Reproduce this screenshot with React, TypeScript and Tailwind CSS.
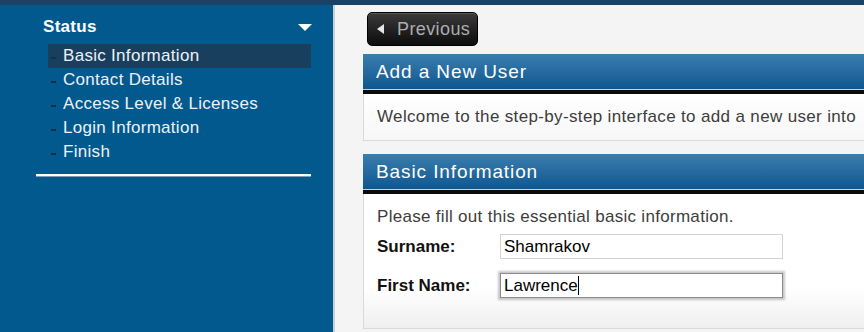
import React from 'react';

const steps = [
  'Basic Information',
  'Contact Details',
  'Access Level & Licenses',
  'Login Information',
  'Finish',
];

const Sidebar: React.FC = () => {
  return (
    <aside className="w-[335px] shrink-0 bg-[#02598e] border-r-2 border-[#c9cfd4] pl-[36px] pr-[22px]">
      {/* Status heading */}
      <div className="mt-[10px] h-[24px] pl-[7px] flex items-center justify-between">
        <span className="text-[17px] font-bold text-white tracking-[0.3px]">Status</span>
        <svg width="14" height="7" viewBox="0 0 14 7" className="mr-[-1px]">
          <path d="M0 0 H14 L7 7 Z" fill="#ffffff" />
        </svg>
      </div>

      {/* Steps */}
      <ul className="mt-[5px] ml-[12px]">
        {steps.map((s, i) => (
          <li
            key={s}
            className={`h-[24px] flex items-center pl-[3px] ${i === 0 ? 'bg-[#193f5f]' : ''}`}
          >
            <span className="w-[5px] h-[2px] mt-[3px] bg-[#122f48] mr-[7px]" />
            <span className="text-[17px] text-[#edf2f6] tracking-[0.3px]">{s}</span>
          </li>
        ))}
      </ul>

      <div className="mt-[10px] h-[2px] bg-white shadow-[0_1px_0_#7f9cb3]" />
    </aside>
  );
};

const PanelHeader: React.FC<{ title: string }> = ({ title }) => (
  <div className="h-[40px] pl-[13px] flex items-center pt-[1px] bg-gradient-to-b from-[#3a7eae] to-[#0a5690] border-b-[4px] border-[#0b0b0b] shadow-[inset_0_-1px_0_#c7d5e0]">
    <span className="text-[19px] text-white tracking-[0.9px] whitespace-nowrap">{title}</span>
  </div>
);

const FieldBox: React.FC<{ value: string; focused?: boolean }> = ({ value, focused }) => (
  <div
    className={`w-[283px] h-[25px] bg-white flex items-center pl-[3px] ${
      focused
        ? 'border border-[#8c8c8c] shadow-[0_0_2px_2px_rgba(0,0,0,0.22)]'
        : 'border border-[#d3d3d3]'
    }`}
  >
    <span className="text-[17px] text-black">{value}</span>
    {focused && <span className="w-[1px] h-[19px] bg-black" />}
  </div>
);

export default function App() {
  return (
    <div
      className="w-[864px] h-[332px] overflow-hidden flex flex-col bg-[#f4f4f4]"
      style={{ fontFamily: '"Liberation Sans", Arial, Helvetica, sans-serif' }}
    >
      <div className="h-[5px] shrink-0 bg-[#1b4264]" />

      <div className="flex flex-1 min-h-0">
        <Sidebar />

        <main className="flex-1 min-w-0 overflow-hidden pl-[28px] pt-[7px]">
          {/* Previous button */}
          <button className="ml-[4px] w-[111px] h-[34px] rounded-[5px] border border-black bg-gradient-to-b from-[#3b3b3b] to-[#0d0d0d] shadow-[inset_0_1px_0_rgba(255,255,255,0.15)] flex items-center pl-[9px] gap-[13px]">
            <svg width="7" height="10" viewBox="0 0 7 10">
              <path d="M7 0 V10 L0 5 Z" fill="#e6e6e6" />
            </svg>
            <span className="text-[18px] text-[#adadad] tracking-[0.4px]">Previous</span>
          </button>

          {/* Add a New User */}
          <section className="mt-[8px] w-[640px]">
            <PanelHeader title="Add a New User" />
            <div className="h-[47px] pl-[13px] flex items-center bg-gradient-to-b from-white to-[#f7f7f7] border-x border-b border-[#dadada]">
              <p className="text-[17px] text-[#3d3d3d] tracking-[0.35px] whitespace-nowrap">
                Welcome to the step-by-step interface to add a new user into
              </p>
            </div>
          </section>

          {/* Basic Information */}
          <section className="mt-[13px] w-[640px]">
            <PanelHeader title="Basic Information" />
            <div className="h-[135px] pl-[13px] pt-[13px] bg-gradient-to-b from-white from-70% to-[#efefef] border-x border-b border-[#dadada]">
              <p className="text-[17px] leading-[20px] text-[#3d3d3d] tracking-[0.3px]">
                Please fill out this essential basic information.
              </p>
              <div className="mt-[7px] flex items-center">
                <label className="w-[123px] text-[17px] font-bold text-[#111]">Surname:</label>
                <FieldBox value="Shamrakov" />
              </div>
              <div className="mt-[13px] flex items-center">
                <label className="w-[123px] text-[17px] font-bold text-[#111]">First Name:</label>
                <FieldBox value="Lawrence" focused />
              </div>
            </div>
          </section>
        </main>
      </div>
    </div>
  );
}
